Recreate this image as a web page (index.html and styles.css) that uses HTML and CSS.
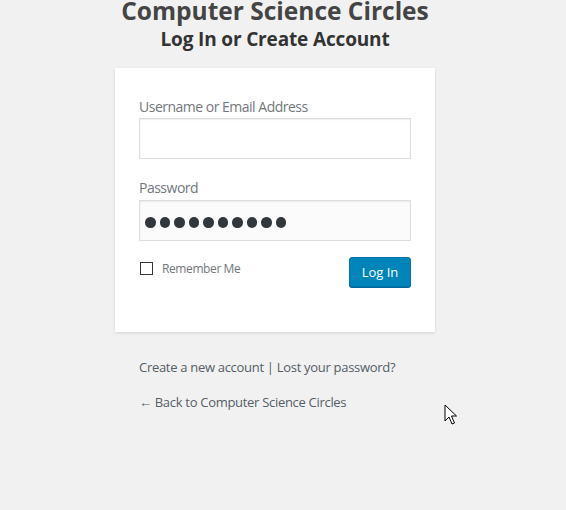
FILE: index.html
```html
<!DOCTYPE html>
<html lang="en">
<head>
<meta charset="utf-8">
<title>Log In</title>
<link rel="stylesheet" href="styles.css">
</head>
<body>
<div class="page">
  <header class="head">
    <h1 class="site-title">Computer Science Circles</h1>
    <h2 class="sub-title">Log In or Create Account</h2>
  </header>
  <form class="card">
    <label class="label" for="user">Username or Email Address</label>
    <input class="field" id="user" type="text">
    <label class="label label-pw">Password</label>
    <div class="field field-pw" aria-label="Password">
      <span class="dot"></span><span class="dot"></span><span class="dot"></span><span class="dot"></span><span class="dot"></span><span class="dot"></span><span class="dot"></span><span class="dot"></span><span class="dot"></span><span class="dot"></span>
    </div>
    <div class="row">
      <label class="remember"><span class="box"></span>Remember Me</label>
      <button class="btn" type="button">Log In</button>
    </div>
  </form>
  <p class="nav"><a href="#">Create a new account</a> | <a href="#">Lost your password?</a></p>
  <p class="back"><a href="#">← Back to Computer Science Circles</a></p>
</div>
<svg class="cursor" width="14" height="22" viewBox="0 0 14 22"><path d="M1 1 L1 17 L5 13 L8 20 L10.5 19 L7.5 12 L12.5 12 Z" fill="#fff" stroke="#000" stroke-width="1" stroke-linejoin="round"/></svg>
</body>
</html>
```
FILE: styles.css
```css
html, body {
  margin: 0;
  padding: 0;
  background: #f1f1f1;
  height: 100%;
}
body {
  font-family: "Open Sans", "Noto Sans", sans-serif;
  color: #444;
  position: relative;
  overflow: hidden;
}
.page {
  width: 550px;
  display: flex;
  flex-direction: column;
  align-items: center;
}
.head {
  text-align: center;
  margin-top: -5px;
}
.site-title {
  margin: 0;
  font-size: 24.5px;
  line-height: 32px;
  font-weight: 700;
  color: #444;
}
.sub-title {
  margin: 0;
  font-size: 19px;
  line-height: 24px;
  font-weight: 700;
  color: #333;
  letter-spacing: -0.15px;
}
.card {
  margin-top: 17px;
  width: 320px;
  box-sizing: border-box;
  background: #fff;
  box-shadow: 0 1px 3px rgba(0,0,0,0.13);
  padding: 29px 24px 45px;
  display: flex;
  flex-direction: column;
}
.label {
  font-size: 14px;
  line-height: 19px;
  color: #72777c;
  letter-spacing: -0.5px;
  margin-bottom: 2px;
}
.label-pw {
  margin-top: 19px;
  margin-bottom: 3px;
}
.field {
  height: 41px;
  box-sizing: border-box;
  border: 1px solid #ddd;
  background: #fbfbfb;
  box-shadow: inset 0 1px 2px rgba(0,0,0,0.07);
  font-family: inherit;
  font-size: 24px;
  padding: 3px 5px;
  color: #32373c;
  outline: none;
}
#user { background: #fff; }
.field-pw {
  display: flex;
  align-items: center;
  gap: 4px;
  padding: 4px 5px 0;
}
.dot {
  width: 10.5px;
  height: 10.5px;
  border-radius: 50%;
  background: #32373c;
}
.row {
  margin-top: 16px;
  display: flex;
  justify-content: space-between;
  align-items: flex-start;
}
.remember {
  display: flex;
  align-items: center;
  font-size: 12px;
  line-height: 13px;
  color: #72777c;
  letter-spacing: -0.4px;
  margin-top: 5px;
}
.box {
  width: 11px;
  height: 11px;
  border: 1px solid #32373c;
  margin: 0 9px 0 1px;
  background: #fff;
}
.btn {
  width: 62px;
  height: 30px;
  background: #0085ba;
  border: 1px solid #0073aa;
  border-radius: 3px;
  box-shadow: 0 1px 0 #006799;
  color: #fff;
  font-family: inherit;
  font-size: 13px;
  padding: 0;
}
.nav, .back {
  width: 272px;
  margin: 0;
  font-size: 13px;
  line-height: 18px;
  color: #555d66;
}
.nav { margin-top: 26px; letter-spacing: -0.3px; }
.back { margin-top: 17px; letter-spacing: -0.3px; }
.nav a, .back a {
  color: #555d66;
  text-decoration: none;
}
.cursor {
  position: absolute;
  left: 444px;
  top: 404px;
}
```
